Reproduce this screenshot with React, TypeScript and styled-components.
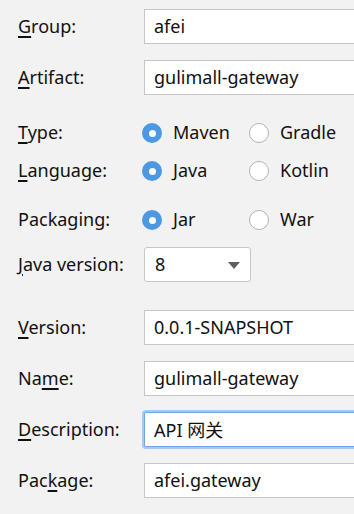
import React, { useState } from 'react';
import styled, { createGlobalStyle } from 'styled-components';

const GlobalStyle = createGlobalStyle`
    html, body {
        margin: 0;
        padding: 0;
        background: #f2f2f2;
        overflow: hidden;
    }
    body {
        font-family: "Noto Sans", "Noto Sans CJK SC", sans-serif;
        font-size: 18px;
        color: #111;
    }
`

const Page = styled.div`
    width: 354px;
    height: 514px;
    padding: 9px 0 0 18px;
    box-sizing: border-box;
    overflow: hidden;
`

const Row = styled.div<{ $top: number; $height: number }>`
    display: grid;
    grid-template-columns: 126px 1fr;
    align-items: center;
    height: ${p => p.$height}px;
    margin-top: ${p => p.$top}px;
`

const Label = styled.label`
    white-space: nowrap;
    line-height: 1;
    margin-top: -2px;

    u {
        text-decoration-thickness: 2px;
        text-underline-offset: 3px;
    }
`

const Field = styled.input<{ $focused?: boolean }>`
    width: 240px;
    height: 35px;
    box-sizing: border-box;
    padding: 0 0 2px 9px;
    font: inherit;
    color: #111;
    background: #fff;
    border: 1px solid ${p => (p.$focused ? '#6ea4e2' : '#c6c6c6')};
    border-radius: ${p => (p.$focused ? '2px' : '0')};
    box-shadow: ${p => (p.$focused ? '0 0 0 2px #a6c9f1' : 'none')};
    outline: none;
`

const Radios = styled.div`
    display: flex;
    align-items: center;
    margin-left: -2px;
`

const RadioItem = styled.label<{ $width: number }>`
    display: flex;
    align-items: center;
    gap: 11px;
    width: ${p => p.$width}px;
    line-height: 1;
    cursor: pointer;
`

const Dot = styled.span<{ $checked: boolean }>`
    flex: none;
    width: 20px;
    height: 20px;
    box-sizing: border-box;
    border-radius: 50%;
    background: ${p => (p.$checked ? '#4c98e3' : '#fff')};
    border: ${p => (p.$checked ? 'none' : '1.5px solid #b3b3b3')};
    display: flex;
    align-items: center;
    justify-content: center;

    &::after {
        content: '';
        display: ${p => (p.$checked ? 'block' : 'none')};
        width: 7px;
        height: 7px;
        border-radius: 50%;
        background: #fff;
    }
`

const RadioText = styled.span`
    margin-top: -2px;
`

const Select = styled.div`
    width: 107px;
    height: 35px;
    box-sizing: border-box;
    background: #fff;
    border: 1px solid #c6c6c6;
    border-radius: 3px;
    display: flex;
    align-items: center;
    justify-content: space-between;
    padding: 0 10px 2px 10px;
`

const Arrow = styled.span`
    width: 0;
    height: 0;
    margin-top: 3px;
    border-left: 6px solid transparent;
    border-right: 6px solid transparent;
    border-top: 7px solid #5f5f5f;
`

interface RadioOption {
    value: string,
    width: number,
}

const RadioGroup: React.FC<{ options: RadioOption[], value: string, onChange: (v: string) => void }> = ({ options, value, onChange }) => (
    <Radios>
        {options.map(o => (
            <RadioItem key={o.value} $width={o.width} onClick={() => onChange(o.value)}>
                <Dot $checked={o.value === value} />
                <RadioText>{o.value}</RadioText>
            </RadioItem>
        ))}
    </Radios>
)

export default function App() {
    const [type, setType] = useState('Maven');
    const [lang, setLang] = useState('Java');
    const [pack, setPack] = useState('Jar');

  return (
    <Page>
        <GlobalStyle />
        <Row $top={0} $height={35}>
            <Label><u>G</u>roup:</Label>
            <Field defaultValue="afei" />
        </Row>
        <Row $top={16} $height={35}>
            <Label><u>A</u>rtifact:</Label>
            <Field defaultValue="gulimall-gateway" />
        </Row>
        <Row $top={26} $height={24}>
            <Label><u>T</u>ype:</Label>
            <RadioGroup options={[{ value: 'Maven', width: 107 }, { value: 'Gradle', width: 100 }]} value={type} onChange={setType} />
        </Row>
        <Row $top={14} $height={24}>
            <Label><u>L</u>anguage:</Label>
            <RadioGroup options={[{ value: 'Java', width: 107 }, { value: 'Kotlin', width: 100 }]} value={lang} onChange={setLang} />
        </Row>
        <Row $top={25} $height={24}>
            <Label>Packaging:</Label>
            <RadioGroup options={[{ value: 'Jar', width: 107 }, { value: 'War', width: 100 }]} value={pack} onChange={setPack} />
        </Row>
        <Row $top={15} $height={35}>
            <Label><u>J</u>ava version:</Label>
            <Select>
                <span>8</span>
                <Arrow />
            </Select>
        </Row>
        <Row $top={28} $height={35}>
            <Label><u>V</u>ersion:</Label>
            <Field defaultValue="0.0.1-SNAPSHOT" />
        </Row>
        <Row $top={16} $height={35}>
            <Label>Na<u>m</u>e:</Label>
            <Field defaultValue="gulimall-gateway" />
        </Row>
        <Row $top={16} $height={35}>
            <Label><u>D</u>escription:</Label>
            <Field $focused defaultValue="API 网关" />
        </Row>
        <Row $top={16} $height={35}>
            <Label>Pac<u>k</u>age:</Label>
            <Field defaultValue="afei.gateway" />
        </Row>
    </Page>
  )
}
